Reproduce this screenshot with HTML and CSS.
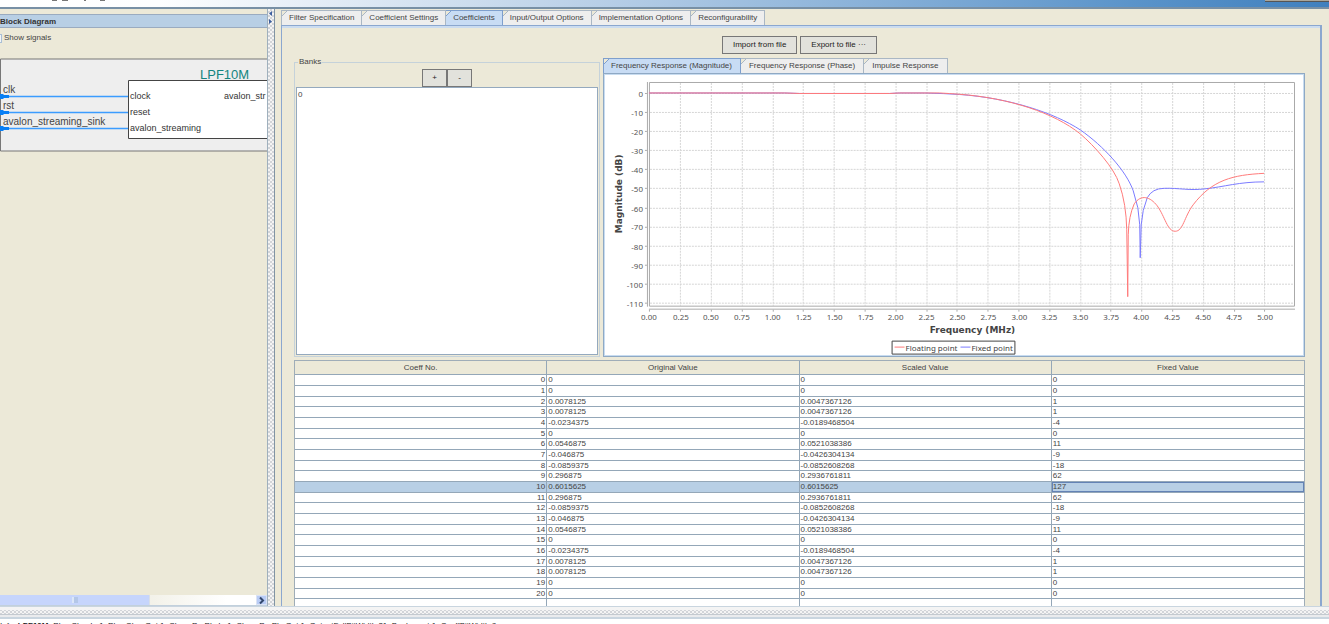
FILE: index.html
```html
<!DOCTYPE html>
<html lang="en">
<head>
<meta charset="utf-8">
<title>LPF10M</title>
<link rel="stylesheet" href="styles.css">
</head>
<body>
<header class="titlebar">
<svg class="title-marks" width="120" height="1" aria-hidden="true"><path d="M52 .5h5M62 .5h6M84 .5h2M100 .5h5" stroke="#777"/></svg>
<span class="window-control"></span>
</header>
<div class="workspace">
<aside class="diagram-pane">
<h2 class="pane-title">Block Diagram</h2>
<label class="signals"><input type="checkbox" class="check">Show signals</label>
<svg class="diagram" viewBox="0 58 267 94" role="img" aria-label="LPF10M block">
<path d="M.5 59H267V151H.5Z" fill="#eee"/>
<path d="M267 59H.5V151H267" fill="none" stroke="#777"/>
<path d="M267 80.500H128.500V138.500H267" fill="#fff" stroke="#444"/>
<text class="d-title" x="200" y="79">LPF10M</text>
<g class="d-port"><text x="3" y="93">clk</text><text x="3" y="109">rst</text><text x="3" y="125">avalon_streaming_sink</text></g>
<path d="M4 96.500H128M4 112.500H128M4 128.500H128" stroke="#3b9cff" stroke-width="1.500"/>
<path d="M0 94h3l1 1h5v3H4l-1 1H0zM0 110h3l1 1h5v3H4l-1 1H0zM0 126h3l1 1h5v3H4l-1 1H0z" fill="#087ff5"/>
<g class="d-inner"><text x="130" y="99">clock</text><text x="130" y="115">reset</text><text x="130" y="131">avalon_streaming</text><text x="224" y="99">avalon_str</text></g>
</svg>
<div class="hscroll"><div class="thumb"><span class="grip"></span></div><button class="scroll-btn" aria-label="Scroll right"><svg width="9" height="9" viewBox="0 0 9 9"><path d="M3 1.500L6 4.500 3 7.500" fill="none" stroke="#34496f" stroke-width="2"/></svg></button></div>
</aside>
<div class="divider"><svg width="6" height="16" viewBox="0 0 6 16"><path d="M4 2v5L1 4.500zM1 10v5l3-2.500z" fill="#3d5f9e"/></svg></div>
<main class="editor">
<nav class="tabs">
<button class="tab">Filter Specification</button><button class="tab">Coefficient Settings</button><button class="tab active">Coefficients</button><button class="tab">Input/Output Options</button><button class="tab">Implementation Options</button><button class="tab">Reconfigurability</button>
</nav>
<section class="panel">
<div class="actions"><button class="btn">Import from file</button><button class="btn">Export to file ···</button></div>
<div class="upper">
<fieldset class="banks"><legend>Banks</legend>
<div class="bank-buttons"><button class="btn small">+</button><button class="btn small">-</button></div>
<div class="bank-list">0</div>
</fieldset>
<div class="response">
<nav class="tabs roomy"><button class="tab active">Frequency Response (Magnitude)</button><button class="tab">Frequency Response (Phase)</button><button class="tab">Impulse Response</button></nav>
<div class="chart">
<svg viewBox="605 76 699 279" role="img" aria-label="Frequency response magnitude">
<path class="grid" d="M680.500 83V306M711.500 83V306M742.500 83V306M773.500 83V306M803.500 83V306M834.500 83V306M865.500 83V306M896.500 83V306M927.500 83V306M957.500 83V306M988.500 83V306M1019.500 83V306M1050.500 83V306M1081.500 83V306M1111.500 83V306M1142.500 83V306M1173.500 83V306M1204.500 83V306M1235.500 83V306M1265.500 83V306M650 93.500H1295M650 112.500H1295M650 131.500H1295M650 150.500H1295M650 169.500H1295M650 188.500H1295M650 208.500H1295M650 227.500H1295M650 246.500H1295M650 265.500H1295M650 284.500H1295M650 303.500H1295"/>
<path class="frame" d="M649.500 82.500H1295.500V306.500H649.500Z"/>
<path class="axis" d="M647.500 82V307M649 309.500H1296M645 93.500h2M645 112.500h2M645 131.500h2M645 150.500h2M645 169.500h2M645 188.500h2M645 208.500h2M645 227.500h2M645 246.500h2M645 265.500h2M645 284.500h2M645 303.500h2M649.500 310v2M680.500 310v2M711.500 310v2M742.500 310v2M773.500 310v2M803.500 310v2M834.500 310v2M865.500 310v2M896.500 310v2M927.500 310v2M957.500 310v2M988.500 310v2M1019.500 310v2M1050.500 310v2M1081.500 310v2M1111.500 310v2M1142.500 310v2M1173.500 310v2M1204.500 310v2M1235.500 310v2M1265.500 310v2"/>
<path class="line blue" d="M649 93H785L800 93.500H890L900 93H925Q945 93.500 960 94.500C1010 98 1055 113 1081 130C1104 146 1127 171 1134 191Q1140 208 1140.500 225L1141 258L1142 225Q1143 210 1148 198Q1153 188.500 1165 188.500C1180 188 1190 191 1206 189C1225 187 1240 182 1265 182"/>
<path class="line red" d="M649 93H785L800 93.500H890L900 93H940Q950 93.500 960 94.300C1010 98 1055 113 1081 134C1095 146 1115 168 1120 184Q1127 204 1127.500 230L1128.500 297L1129 235Q1129.500 216 1135 204C1142 194 1151 197 1158 206C1166 217 1168 231.500 1176 231.500C1184 231.500 1185 217 1194 205C1213 180 1234 175 1265 173.500"/>
<g class="ylab"><text x="643" y="97">0</text><text x="643" y="116">-10</text><text x="643" y="135">-20</text><text x="643" y="154">-30</text><text x="643" y="173">-40</text><text x="643" y="192">-50</text><text x="643" y="212">-60</text><text x="643" y="230">-70</text><text x="643" y="250">-80</text><text x="643" y="269">-90</text><text x="643" y="288">-100</text><text x="643" y="307">-110</text></g>
<g class="xlab"><text x="649" y="320">0.00</text><text x="681" y="320">0.25</text><text x="711" y="320">0.50</text><text x="742" y="320">0.75</text><text x="773" y="320">1.00</text><text x="804" y="320">1.25</text><text x="835" y="320">1.50</text><text x="866" y="320">1.75</text><text x="896" y="320">2.00</text><text x="927" y="320">2.25</text><text x="958" y="320">2.50</text><text x="989" y="320">2.75</text><text x="1020" y="320">3.00</text><text x="1050" y="320">3.25</text><text x="1081" y="320">3.50</text><text x="1112" y="320">3.75</text><text x="1142" y="320">4.00</text><text x="1173" y="320">4.25</text><text x="1204" y="320">4.50</text><text x="1235" y="320">4.75</text><text x="1266" y="320">5.00</text></g>
<text class="axis-title" x="973" y="333">Frequency (MHz)</text>
<text class="axis-title" transform="translate(622 194) rotate(-90)">Magnitude (dB)</text>
<path d="M892.500 341.500H1015.500V354.500H892.500Z" fill="#fff" stroke="#444"/>
<path class="line red" d="M895 347.500h10"/><path class="line blue" d="M961 347.500h10"/>
<g class="leg"><text x="906" y="351">Floating point</text><text x="972" y="351">Fixed point</text></g>
</svg>
</div>
</div>
</div>
<div class="table-wrap">
<table>
<thead><tr><th>Coeff No.</th><th>Original Value</th><th>Scaled Value</th><th>Fixed Value</th></tr></thead>
<tbody>
<tr><td>0</td><td>0</td><td>0</td><td>0</td></tr>
<tr><td>1</td><td>0</td><td>0</td><td>0</td></tr>
<tr><td>2</td><td>0.0078125</td><td>0.0047367126</td><td>1</td></tr>
<tr><td>3</td><td>0.0078125</td><td>0.0047367126</td><td>1</td></tr>
<tr><td>4</td><td>-0.0234375</td><td>-0.0189468504</td><td>-4</td></tr>
<tr><td>5</td><td>0</td><td>0</td><td>0</td></tr>
<tr><td>6</td><td>0.0546875</td><td>0.0521038386</td><td>11</td></tr>
<tr><td>7</td><td>-0.046875</td><td>-0.0426304134</td><td>-9</td></tr>
<tr><td>8</td><td>-0.0859375</td><td>-0.0852608268</td><td>-18</td></tr>
<tr><td>9</td><td>0.296875</td><td>0.2936761811</td><td>62</td></tr>
<tr class="selected"><td>10</td><td>0.6015625</td><td>0.6015625</td><td class="focus">127</td></tr>
<tr><td>11</td><td>0.296875</td><td>0.2936761811</td><td>62</td></tr>
<tr><td>12</td><td>-0.0859375</td><td>-0.0852608268</td><td>-18</td></tr>
<tr><td>13</td><td>-0.046875</td><td>-0.0426304134</td><td>-9</td></tr>
<tr><td>14</td><td>0.0546875</td><td>0.0521038386</td><td>11</td></tr>
<tr><td>15</td><td>0</td><td>0</td><td>0</td></tr>
<tr><td>16</td><td>-0.0234375</td><td>-0.0189468504</td><td>-4</td></tr>
<tr><td>17</td><td>0.0078125</td><td>0.0047367126</td><td>1</td></tr>
<tr><td>18</td><td>0.0078125</td><td>0.0047367126</td><td>1</td></tr>
<tr><td>19</td><td>0</td><td>0</td><td>0</td></tr>
<tr><td>20</td><td>0</td><td>0</td><td>0</td></tr>
<tr><td></td><td></td><td></td><td></td></tr>
</tbody>
</table>
</div>
</section>
</main>
</div>
<div class="hdivider"></div>
<footer class="messages">Info: <b>LPF10M:</b> PhysChanIn 1, PhysChanOut 1, ChansPerPhyIn 1, ChansPerPhyOut 1, OutputFullBitWidth 21, Bankcount 1, CoeffBitWidth 8</footer>
</body>
</html>
```
FILE: styles.css
```css
* { box-sizing: border-box; }
html, body { height: 100%; }
body {
  margin: 0;
  display: flex;
  flex-direction: column;
  overflow: hidden;
  background: #ece9d8;
  color: #444;
  font: 8px/10px "Liberation Sans", Arial, sans-serif;
}
button, input { font: inherit; color: inherit; margin: 0; }
button { white-space: nowrap; }
svg { display: block; }

.titlebar {
  flex: none;
  display: flex;
  justify-content: space-between;
  align-items: flex-start;
  height: 9px;
  border-bottom: 2px solid #7890a5;
  background: linear-gradient(90deg, #fff 0, #fdfeff 12%, #b8cfe7 45%, #5b94ca 85%, #4080be 100%);
}
.window-control { width: 64px; height: 2px; background: #aaa69b; border-bottom: 1px solid #555; }

.workspace { flex: 1; min-height: 0; display: flex; }
.diagram-pane {
  flex: none;
  width: 268px;
  display: flex;
  flex-direction: column;
  padding-top: 5px;
  border-right: 1px solid #9fb0bd;
}
.pane-title {
  margin: 0;
  height: 14px;
  border: solid #9aabc0;
  border-width: 1px 0;
  background: #b8cfe5;
  color: #333;
  font-size: 8px;
  line-height: 14px;
}
.signals { display: flex; align-items: center; gap: 2px; height: 20px; }
.check {
  appearance: none;
  width: 10px;
  height: 9px;
  margin-left: -8px;
  border: 1px solid #a9bfd6;
  background: #f2f5f8;
}
.diagram { width: 100%; margin-top: 10px; }
.d-title { font-size: 13px; fill: #138580; }
.d-port { font-size: 10px; fill: #444; }
.d-inner { font-size: 9px; fill: #333; }

.hscroll {
  margin-top: auto;
  display: flex;
  justify-content: space-between;
  height: 11px;
  border-bottom: 1px solid #c2d0dc;
  background: linear-gradient(90deg, #f2f1e8 55%, #fff 85%);
}
.thumb { width: 150px; display: flex; justify-content: center; align-items: center; background: #c6d5fc; border-right: 1px solid #d9dfe8; }
.grip { width: 6px; height: 6px; background: #b4c7e8; border-left: 2px solid #dce7f8; }
.scroll-btn { width: 11px; padding: 0; border: 1px solid #dbe3f5; background: #b9ccf5; }

.divider {
  flex: none;
  width: 6px;
  background: repeating-conic-gradient(#d2d4d8 0 25%, #f4f4f4 0 50%) 0 0 / 4px 4px;
}
.editor {
  flex: 1;
  min-width: 0;
  display: flex;
  flex-direction: column;
  padding: 1px 7px 0 6px;
  border-left: 1px solid #8094a4;
}
.tabs { display: flex; flex: none; }
.tab {
  height: 15px;
  padding: 0 7px;
  border: 1px solid #aab7c4;
  border-width: 1px 1px 0 0;
  background: linear-gradient(135deg, #ece9d8 0 3px, #aab7c4 3px 4px, #eee 4px);
  color: #444;
}
.roomy .tab { padding: 0 8px; }
.roomy .tab:first-child { padding-left: 7px; }
.tab:first-child { border-left-width: 1px; }
.tab.active { background: linear-gradient(135deg, #ece9d8 0 3px, #7e9fcd 3px 4px, #c8dcf4 4px); border-color: #7e9fcd; }
.panel {
  flex: 1;
  min-height: 0;
  display: flex;
  flex-direction: column;
  padding: 10px 15px 0 12px;
  border: solid #8ba7cf;
  border-width: 1px 2px 0 1px;
  box-shadow: inset 0 2px #cbdcf0;
}
.actions { display: flex; justify-content: center; gap: 3px; margin-bottom: 4px; }
.btn {
  height: 18px;
  padding: 0 10px;
  border: 1px solid #777;
  border-radius: 0;
  background: #e2e2dc;
  color: #222;
}
.btn.small { width: 25px; padding: 0; }
.upper { display: flex; gap: 3px; }
.banks {
  flex: 0 1 306px;
  min-width: 0;
  display: flex;
  flex-direction: column;
  margin: 0;
  padding: 3px 1px 1px;
  border: 1px solid #c5d2da;
}
.banks legend { margin-left: 2px; padding: 0 1px; line-height: 8px; }
.bank-buttons { display: flex; justify-content: center; }
.bank-list { flex: 1; padding: 2px 1px; border: 1px solid #94a9be; background: #fff; }
.response { flex: 1; min-width: 0; }
.chart { padding: 2px 1px 1px; border: 1px solid #8fa9c4; background: #fff; box-shadow: inset 0 0 0 1px #c8dcf0; }
.chart svg { width: 100%; font-family: "Noto Sans", sans-serif; }
.grid { fill: none; stroke: #d5d5d5; stroke-dasharray: 2 1; }
.frame { fill: none; stroke: #aaa; }
.axis { fill: none; stroke: #aaa; }
.line { fill: none; }
.red { stroke: #ff7a7a; }
.blue { stroke: #7a7aff; }
.ylab, .xlab { font-size: 8px; fill: #555; }
.ylab { text-anchor: end; }
.xlab, .axis-title { text-anchor: middle; }
.axis-title { font: bold 9px "DejaVu Sans", sans-serif; fill: #444; }
.leg { font-size: 8px; fill: #444; }

.table-wrap { flex: 1; min-height: 0; margin-top: 3px; overflow: hidden; border: 1px solid #9fadb8; border-bottom: 0; background: #fff; }
table { width: 100%; table-layout: fixed; border-collapse: separate; border-spacing: 0; }
th { height: 14px; padding: 2px 0 0; background: #ece9d8; font-weight: normal; border: solid #94a7b8; border-width: 0 1px 1px 0; }
td { height: 11px; padding: 0 1px; line-height: 9px; border: solid #94a7b8; border-width: 0 1px 1px 0; }
tr:nth-child(3n) td { height: 10px; }
th:last-child, td:last-child { border-right: 0; }
td:first-child { text-align: right; }
.selected td { background: #b8cfe5; }
.selected .focus { box-shadow: inset 0 0 0 1px #6382b5; }

.hdivider {
  flex: none;
  height: 13px;
  border: solid #c9d5df;
  border-width: 1px 0 2px;
  background: linear-gradient(#f4f4f4 3px, transparent 3px 7px, #c4cad0 7px 8px, #eaebed 8px), repeating-conic-gradient(#d2d4d8 0 25%, #f4f4f4 0 50%) 0 0 / 4px 4px;
}
.messages { flex: none; height: 5px; padding-top: 2px; line-height: 9px; white-space: nowrap; overflow: hidden; background: #fff; color: #222; }
```
